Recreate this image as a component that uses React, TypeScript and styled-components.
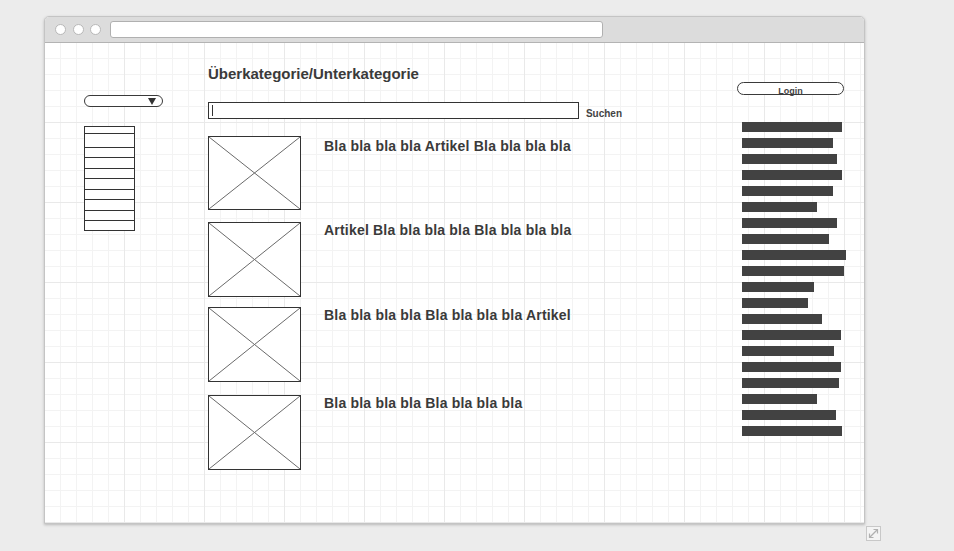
import React from "react";
import styled, { createGlobalStyle } from "styled-components";

const Global = createGlobalStyle`
  html, body { margin: 0; padding: 0; background: #ececec; }
  body { font-family: "Liberation Sans", Arial, sans-serif; color: #333; }
`;

const Page = styled.div`
  padding: 16px 0 0 44px;
  height: 551px;
  box-sizing: border-box;
  position: relative;
`;

const Window = styled.div`
  width: 821px;
  height: 508px;
  box-sizing: border-box;
  display: flex;
  flex-direction: column;
  border: 1px solid #c4c4c4;
  border-radius: 5px 5px 0 0;
  background: #fff;
  box-shadow: 0 1px 3px rgba(0, 0, 0, 0.22);
  overflow: hidden;
`;

const TitleBar = styled.div`
  height: 26px;
  flex: none;
  box-sizing: border-box;
  background: #dcdcdc;
  border-bottom: 1px solid #b3b3b3;
  display: flex;
  align-items: center;
  padding-left: 10px;
`;

const Dot = styled.span`
  width: 11px;
  height: 11px;
  box-sizing: border-box;
  border-radius: 50%;
  background: #fff;
  border: 1px solid #b8b8b8;
  margin-right: 6.5px;
`;

const UrlBar = styled.div`
  margin-left: 2px;
  width: 493px;
  height: 17px;
  box-sizing: border-box;
  background: #fff;
  border: 1px solid #b0b0b0;
  border-radius: 3px;
`;

const Canvas = styled.div`
  flex: 1;
  display: flex;
  align-items: flex-start;
  background-color: #fff;
  background-image:
    linear-gradient(to right, transparent 79px, #e9e9e9 79px),
    linear-gradient(to bottom, transparent 79px, #e9e9e9 79px),
    linear-gradient(to right, transparent 15px, #f3f3f3 15px),
    linear-gradient(to bottom, transparent 15px, #f3f3f3 15px);
  background-size: 80px 80px, 80px 80px, 16px 16px, 16px 16px;
`;

const LeftCol = styled.div`
  margin-left: 39px;
  width: 79px;
  padding-top: 52px;
  display: flex;
  flex-direction: column;
`;

const Dropdown = styled.div`
  height: 12px;
  box-sizing: border-box;
  border: 1px solid #3a3a3a;
  border-radius: 6px;
  background: #fff;
  display: flex;
  align-items: center;
  justify-content: flex-end;
  padding-right: 6px;
`;

const Arrow = styled.span`
  width: 0;
  height: 0;
  border-left: 4.5px solid transparent;
  border-right: 4.5px solid transparent;
  border-top: 7px solid #333;
  margin-top: 1px;
`;

const List = styled.div`
  margin-top: 19px;
  width: 51px;
  box-sizing: border-box;
  border: 1px solid #333;
  border-bottom: none;
  background: #fff;
`;

const ListRow = styled.div<{ $h: number }>`
  height: ${(p) => p.$h}px;
  box-sizing: border-box;
  border-bottom: 1px solid #333;
`;

const MiddleCol = styled.div`
  margin-left: 45px;
  width: 414px;
  padding-top: 22px;
  display: flex;
  flex-direction: column;
`;

const Heading = styled.h1`
  margin: 0;
  font-size: 15px;
  line-height: 17px;
  font-weight: bold;
  color: #3a3a3a;
`;

const SearchRow = styled.div`
  margin-top: 20px;
  display: flex;
  align-items: flex-end;
`;

const SearchInput = styled.div`
  width: 372px;
  height: 17px;
  box-sizing: border-box;
  border: 1px solid #333;
  background: #fff;
  display: flex;
  align-items: center;
  padding-left: 3px;
`;

const Caret = styled.span`
  width: 1px;
  height: 11px;
  background: #333;
`;

const SearchLabel = styled.span`
  margin-left: 7px;
  font-size: 10px;
  line-height: 12px;
  font-weight: bold;
  color: #444;
  position: relative;
  top: 1px;
`;

const Article = styled.div<{ $top: number }>`
  margin-top: ${(p) => p.$top}px;
  display: flex;
  align-items: flex-start;
`;

const Thumb = styled.svg`
  flex: none;
  display: block;
`;

const ArticleTitle = styled.h2<{ $offset: number }>`
  margin: ${(p) => p.$offset}px 0 0 23px;
  font-size: 14px;
  line-height: 16px;
  letter-spacing: 0.2px;
  font-weight: bold;
  color: #3a3a3a;
  white-space: nowrap;
`;

const RightCol = styled.div`
  margin-left: 115px;
  width: 110px;
  padding-top: 39px;
  display: flex;
  flex-direction: column;
  align-items: flex-start;
`;

const LoginButton = styled.div`
  width: 107px;
  height: 13px;
  box-sizing: border-box;
  border: 1px solid #3a3a3a;
  border-radius: 7px;
  background: #fff;
  font-size: 9px;
  line-height: 12px;
  padding-top: 2px;
  font-weight: bold;
  color: #444;
  text-align: center;
  overflow: visible;
  white-space: nowrap;
`;

const Bars = styled.div`
  margin-top: 27px;
  margin-left: 5px;
  display: flex;
  flex-direction: column;
  gap: 6px;
`;

const Bar = styled.div`
  height: 10px;
  background: #424242;
`;

const ResizeHandle = styled.svg`
  position: absolute;
  left: 866px;
  top: 526px;
`;

const listRows = [7, 14, 10, 11, 10, 11, 10, 11, 10, 10];

const articles = [
  { top: 17, h: 74, offset: 2, title: "Bla bla bla bla Artikel Bla bla bla bla" },
  { top: 12, h: 75, offset: 0, title: "Artikel Bla bla bla bla Bla bla bla bla" },
  { top: 10, h: 75, offset: 0, title: "Bla bla bla bla Bla bla bla bla Artikel" },
  { top: 13, h: 75, offset: 0, title: "Bla bla bla bla Bla bla bla bla" },
];

const barWidths = [100, 91, 95, 100, 91, 75, 95, 87, 104, 102, 72, 66, 80, 99, 92, 99, 97, 75, 94, 100];

const ImagePlaceholder: React.FC<{ h: number }> = ({ h }) => (
  <Thumb width={93} height={h} viewBox={`0 0 93 ${h}`}>
    <rect x={0.5} y={0.5} width={92} height={h - 1} fill="#fff" stroke="#333" strokeWidth={1} />
    <line x1={1} y1={1} x2={92} y2={h - 1} stroke="#6a6a6a" strokeWidth={1} />
    <line x1={92} y1={1} x2={1} y2={h - 1} stroke="#6a6a6a" strokeWidth={1} />
  </Thumb>
);

export default function App() {
  return (
    <>
      <Global />
      <Page>
        <Window>
          <TitleBar>
            <Dot />
            <Dot />
            <Dot />
            <UrlBar />
          </TitleBar>
          <Canvas>
            <LeftCol>
              <Dropdown>
                <Arrow />
              </Dropdown>
              <List>
                {listRows.map((h, i) => (
                  <ListRow key={i} $h={h} />
                ))}
              </List>
            </LeftCol>
            <MiddleCol>
              <Heading>Überkategorie/Unterkategorie</Heading>
              <SearchRow>
                <SearchInput>
                  <Caret />
                </SearchInput>
                <SearchLabel>Suchen</SearchLabel>
              </SearchRow>
              {articles.map((a, i) => (
                <Article key={i} $top={a.top}>
                  <ImagePlaceholder h={a.h} />
                  <ArticleTitle $offset={a.offset}>{a.title}</ArticleTitle>
                </Article>
              ))}
            </MiddleCol>
            <RightCol>
              <LoginButton>Login</LoginButton>
              <Bars>
                {barWidths.map((w, i) => (
                  <Bar key={i} style={{ width: w }} />
                ))}
              </Bars>
            </RightCol>
          </Canvas>
        </Window>
        <ResizeHandle width={15} height={15} viewBox="0 0 15 15">
          <rect x={0.5} y={0.5} width={14} height={14} fill="#f4f4f4" stroke="#c8c8c8" />
          <path d="M3.5 11.5 L11.5 3.5" stroke="#b0b0b0" strokeWidth={1.2} />
          <path d="M7.5 3.5 H11.5 V7.5" stroke="#b0b0b0" strokeWidth={1.2} fill="none" />
          <path d="M3.5 7.5 V11.5 H7.5" stroke="#b0b0b0" strokeWidth={1.2} fill="none" />
        </ResizeHandle>
      </Page>
    </>
  );
}
